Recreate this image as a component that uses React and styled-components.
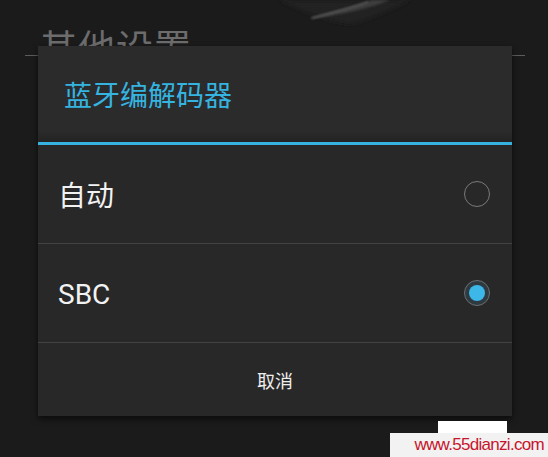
import styled, { createGlobalStyle } from "styled-components";

const GlobalStyle = createGlobalStyle`
  html, body {
    margin: 0;
    padding: 0;
    background: #1b1b1c;
  }
  body {
    font-family: Roboto, "Noto Sans CJK SC", sans-serif;
  }
`;

const Screen = styled.div`
  position: relative;
  width: 548px;
  height: 457px;
  overflow: hidden;
  background: #1b1b1c;
`;

const Wallpaper = styled.svg`
  position: absolute;
  left: 240px;
  top: 0;
`;

const SettingsHeader = styled.div`
  padding: 28px 0 0 40px;
  height: 55px;
  box-sizing: border-box;
  font-size: 37px;
  line-height: 44px;
  color: #6c6c6c;
  letter-spacing: 1px;
`;

const HeaderRule = styled.div`
  margin: 0 23px 0 25px;
  height: 1px;
  background: #5c5c5c;
`;

const Dialog = styled.div`
  position: absolute;
  left: 38px;
  top: 46px;
  width: 474px;
  background: #282828;
  border-radius: 2px 2px 0 0;
  box-shadow: 0 3px 6px rgba(0, 0, 0, 0.6);
  display: flex;
  flex-direction: column;
`;

const Title = styled.div`
  height: 99px;
  padding-left: 26px;
  box-sizing: border-box;
  display: flex;
  align-items: center;
  font-size: 28px;
  color: #35b4e0;
  background: linear-gradient(#2b2b2b 0%, #2b2b2b 88%, #232323 100%);
  border-bottom: 3px solid #36b2e0;
`;

const Option = styled.div`
  height: 98px;
  padding: 0 22px 0 20px;
  display: flex;
  align-items: center;
  justify-content: space-between;
  border-bottom: 1px solid #424242;
`;

const OptionLabel = styled.span`
  font-size: 28px;
  color: #f2f2f2;
  padding-top: ${(p) => (p.$latin ? "2px" : "0")};
`;

const Radio = styled.span`
  width: 26px;
  height: 26px;
  box-sizing: border-box;
  border-radius: 50%;
  border: 1.5px solid ${(p) => (p.$checked ? "#6a6f72" : "#7a7a7a")};
  background: ${(p) => (p.$checked ? "#2f3a40" : "transparent")};
  display: flex;
  align-items: center;
  justify-content: center;

  &::after {
    content: "";
    display: ${(p) => (p.$checked ? "block" : "none")};
    width: 16px;
    height: 16px;
    border-radius: 50%;
    background: #3db6e8;
  }
`;

const ButtonBar = styled.div`
  height: 73px;
  display: flex;
  align-items: center;
  justify-content: center;
  font-size: 18px;
  color: #eeeeee;
`;

const Watermark = styled.div`
  position: absolute;
  right: 0;
  bottom: 0;
  display: flex;
  flex-direction: column;
  align-items: flex-end;
`;

const WatermarkTab = styled.div`
  width: 69px;
  height: 12px;
  margin-right: 41px;
  background: #ffffff;
`;

const WatermarkText = styled.div`
  width: 158px;
  height: 24px;
  box-sizing: border-box;
  padding: 1px 4px 0 0;
  background: #f2f2f2;
  text-align: right;
  font-family: "Liberation Sans", Arial, sans-serif;
  font-size: 17px;
  line-height: 22px;
  letter-spacing: -0.7px;
  color: #c8142c;
`;

export default function App() {
  return (
    <>
      <GlobalStyle />
      <Screen>
        <Wallpaper width="180" height="40" viewBox="0 0 180 40">
          <defs>
            <filter id="blur">
              <feGaussianBlur stdDeviation="2" />
            </filter>
            <filter id="soft">
              <feGaussianBlur stdDeviation="0.8" />
            </filter>
          </defs>
          <path
            d="M40 0 C60 10 80 20 110 24 C130 20 150 10 170 0 Z"
            fill="#202020"
            filter="url(#blur)"
          />
          <path
            d="M70 18 C90 12 115 6 132 0 L150 0 C130 8 105 14 72 19 Z"
            fill="#3c3c3c"
            filter="url(#soft)"
          />
          <path
            d="M72 18 C92 13 112 8 128 2"
            stroke="#5a5a5a"
            strokeWidth="1.5"
            fill="none"
            filter="url(#soft)"
          />
        </Wallpaper>
        <SettingsHeader>其他设置</SettingsHeader>
        <HeaderRule />
        <Dialog>
          <Title>蓝牙编解码器</Title>
          <Option>
            <OptionLabel>自动</OptionLabel>
            <Radio />
          </Option>
          <Option>
            <OptionLabel $latin>SBC</OptionLabel>
            <Radio $checked />
          </Option>
          <ButtonBar>取消</ButtonBar>
        </Dialog>
        <Watermark>
          <WatermarkTab />
          <WatermarkText>www.55dianzi.com</WatermarkText>
        </Watermark>
      </Screen>
    </>
  );
}
